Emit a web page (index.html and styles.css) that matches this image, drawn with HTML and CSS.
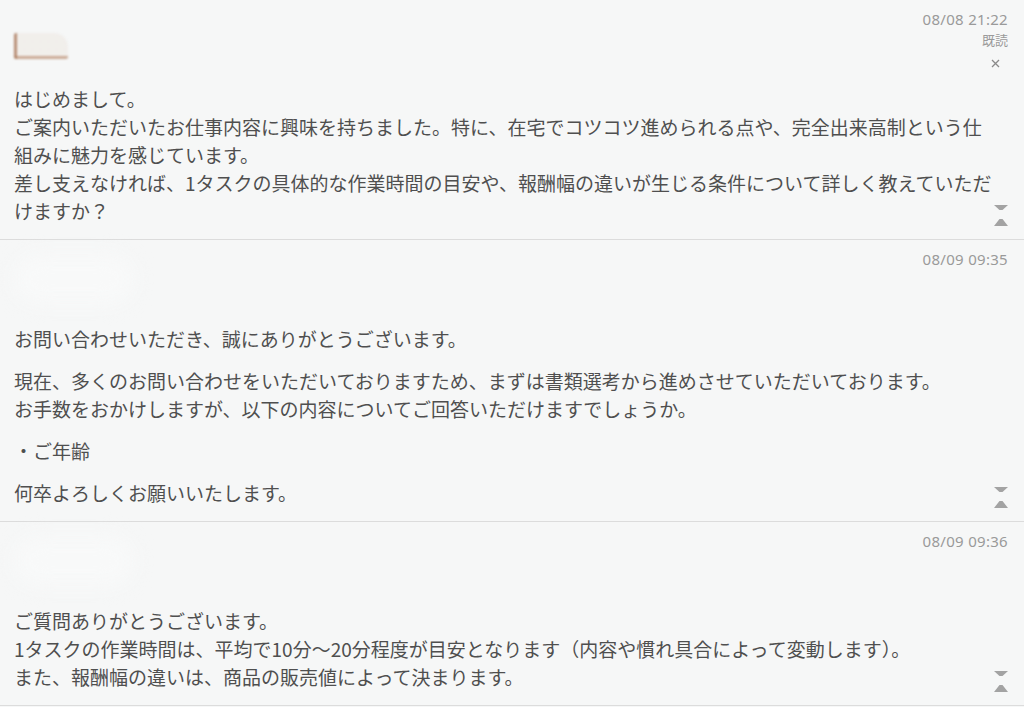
FILE: index.html
```html
<!DOCTYPE html>
<html lang="ja">
<head>
    <meta charset="UTF-8">
    <meta name="viewport" content="width=device-width, initial-scale=1.0">
    <title>メッセージ</title>
    <link rel="stylesheet" href="styles.css">
</head>
<body>

<div class="thread">
    <div class="message">
        <div class="message-head">
            <div class="sender"><span class="sender-blur"></span></div>
            <div class="meta">
                <span class="time">08/08 21:22</span>
                <span class="read">既読</span>
                <span class="close"><svg width="9" height="9" viewBox="0 0 9 9"><path d="M1 1L8 8M8 1L1 8"/></svg></span>
            </div>
        </div>
        <div class="message-body">
            <p>はじめまして。<br>ご案内いただいたお仕事内容に興味を持ちました。特に、在宅でコツコツ進められる点や、完全出来高制という仕組みに魅力を感じています。<br>差し支えなければ、1タスクの具体的な作業時間の目安や、報酬幅の違いが生じる条件について詳しく教えていただけますか？</p>
        </div>
        <button class="toggle" aria-label="折りたたむ">
            <svg width="14" height="21" viewBox="0 0 14 21"><polygon points="0,0 14,0 8.5,5 5.5,5"/><polygon points="5.5,14 8.5,14 14,21 0,21"/></svg>
        </button>
    </div>

    <div class="message">
        <div class="message-head">
            <div class="sender"><span class="sender-blur faint"></span></div>
            <div class="meta">
                <span class="time">08/09 09:35</span>
            </div>
        </div>
        <div class="message-body">
            <p>お問い合わせいただき、誠にありがとうございます。</p>
            <p>現在、多くのお問い合わせをいただいておりますため、まずは書類選考から進めさせていただいております。<br>お手数をおかけしますが、以下の内容についてご回答いただけますでしょうか。</p>
            <p>・ご年齢</p>
            <p>何卒よろしくお願いいたします。</p>
        </div>
        <button class="toggle" aria-label="折りたたむ">
            <svg width="14" height="21" viewBox="0 0 14 21"><polygon points="0,0 14,0 8.5,5 5.5,5"/><polygon points="5.5,14 8.5,14 14,21 0,21"/></svg>
        </button>
    </div>

    <div class="message">
        <div class="message-head">
            <div class="sender"><span class="sender-blur faint"></span></div>
            <div class="meta">
                <span class="time">08/09 09:36</span>
            </div>
        </div>
        <div class="message-body">
            <p>ご質問ありがとうございます。<br>1タスクの作業時間は、平均で10分〜20分程度が目安となります（内容や慣れ具合によって変動します）。<br>また、報酬幅の違いは、商品の販売値によって決まります。</p>
        </div>
        <button class="toggle" aria-label="折りたたむ">
            <svg width="14" height="21" viewBox="0 0 14 21"><polygon points="0,0 14,0 8.5,5 5.5,5"/><polygon points="5.5,14 8.5,14 14,21 0,21"/></svg>
        </button>
    </div>
</div>

</body>
</html>
```

FILE: styles.css
```css
body {
    margin: 0;
    background-color: #f6f7f7;
    font-family: "Noto Sans CJK JP", "Noto Sans", sans-serif;
    color: #4f4f4f;
}
.message {
    position: relative;
    padding: 0 16px 14px 14px;
    border-bottom: 1px solid #dcdcdc;
}
.message-head {
    display: flex;
    justify-content: space-between;
    height: 85px;
}
.sender-blur {
    display: block;
    width: 54px;
    height: 26px;
    margin-top: 33px;
    border-radius: 2px 14px 2px 2px;
    background:
        linear-gradient(to right, rgba(170, 120, 90, 0.8) 0 3px, transparent 3px),
        linear-gradient(to top, rgba(185, 140, 110, 0.7) 0 3px, rgba(240, 236, 232, 0.8) 3px);
    filter: blur(1.2px);
}
.sender-blur.faint {
    width: 120px;
    height: 50px;
    margin-top: 14px;
    border-radius: 40px;
    background: #f8f9f9;
    filter: blur(10px);
}
.meta {
    display: flex;
    flex-direction: column;
    align-items: flex-end;
    padding-top: 9px;
    color: #9a9a9a;
}
.time {
    font-family: "Noto Sans", sans-serif;
    font-size: 15px;
    letter-spacing: 0.3px;
    line-height: 20px;
}
.read {
    font-size: 13px;
    line-height: 22px;
}
.close {
    display: flex;
    align-items: center;
    height: 24px;
    padding-right: 8px;
}
.close svg {
    display: block;
    stroke: #8a8a8a;
    stroke-width: 1.3;
}
.message-body {
    padding-right: 10px;
    font-size: 19px;
    line-height: 28px;
}
.message-body p {
    margin: 0;
}
.message-body p + p {
    margin-top: 14px;
}
.toggle {
    position: absolute;
    right: 16px;
    bottom: 13px;
    padding: 0;
    border: none;
    background: none;
    cursor: pointer;
}
.toggle svg {
    display: block;
    fill: #a3a3a3;
}
```
